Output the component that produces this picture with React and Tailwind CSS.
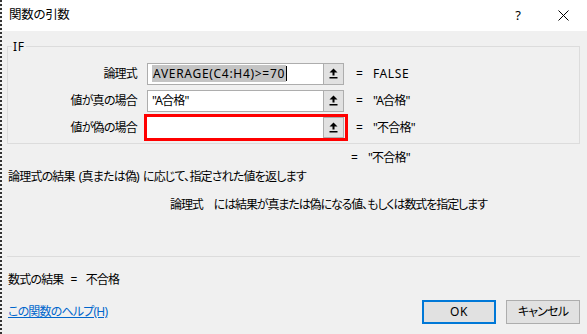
import React from "react";

const FONT = { fontFamily: '"Noto Sans","Noto Sans CJK JP",sans-serif' };

function RefIcon() {
  return (
    <svg width="9" height="11" viewBox="0 0 9 11">
      <path d="M4.5 0.5 L8.5 4.5 L5.5 4.5 L5.5 7.5 L3.5 7.5 L3.5 4.5 L0.5 4.5 Z" fill="#000" />
      <rect x="0.5" y="9" width="8" height="1.5" fill="#000" />
    </svg>
  );
}

function RefButton() {
  return (
    <div className="w-[21px] h-full border border-[#adadad] bg-[#e1e1e1] flex items-center justify-center shrink-0">
      <RefIcon />
    </div>
  );
}

function InputBox({ children }) {
  return (
    <div className="flex h-[22px] w-[197px]">
      <div className="flex-1 bg-white border border-[#adadad] border-r-0 flex items-center pl-[4px] overflow-hidden whitespace-nowrap">
        {children}
      </div>
      <RefButton />
    </div>
  );
}

function Row({ label, children, value, latin }) {
  return (
    <div className="flex items-center h-[27px]">
      <div className="w-[129px] text-right shrink-0">{label}</div>
      <div className="w-[10px] shrink-0" />
      {children}
      <div className="w-[12px] shrink-0" />
      <div className="w-[17px] shrink-0">=</div>
      <div className={latin ? "tracking-[0.6px]" : ""}>{value}</div>
    </div>
  );
}

export default function App() {
  return (
    <div
      className="w-[587px] h-[334px] bg-[#f0f0f0] text-[12px] leading-none text-black overflow-hidden tracking-[-0.8px] [font-feature-settings:'palt'] border-l-2 border-dotted border-[#333]"
      style={FONT}
    >
      {/* Title bar */}
      <div className="h-[31px] bg-white flex items-center pl-[7px] ml-[-2px]">
        <div className="pl-[2px] text-[12.5px] tracking-[-0.3px]">関数の引数</div>
        <div className="flex-1" />
        <div className="w-[20px] text-center text-[13px] tracking-normal">?</div>
        <div className="w-[25px]" />
        <div className="w-[20px] flex justify-center">
          <svg width="11" height="11" viewBox="0 0 11 11">
            <path d="M0.5 0.5 L10.5 10.5 M10.5 0.5 L0.5 10.5" stroke="#000" strokeWidth="1" />
          </svg>
        </div>
        <div className="w-[14px]" />
      </div>

      <div className="pl-[5px] pr-[7px]">
        {/* Fieldset */}
        <div className="relative mt-[15px] h-[98px] border border-[#dcdcdc] pt-[13px]">
          <div className="absolute left-[4px] top-[-6px] bg-[#f0f0f0] px-[1px] text-[12px] tracking-[0.6px]">IF</div>
          <Row label="論理式" value="FALSE" latin>
            <InputBox>
              <span className="bg-[#c4c4c4] leading-[17px] px-[1px] tracking-[0.7px]">AVERAGE(C4:H4)&gt;=70</span>
              <span className="w-[1px] h-[15px] bg-black" />
            </InputBox>
          </Row>
          <Row label="値が真の場合" value={'"A合格"'}>
            <InputBox>"A合格"</InputBox>
          </Row>
          <Row label="値が偽の場合" value={'"不合格"'}>
            <div className="ml-[-3px] mr-[-4px] border-[3px] border-[#ff0000] h-[27px] w-[204px] flex">
              <div className="flex h-full w-[197px]">
                <div className="flex-1 bg-white border-0" />
                <RefButton />
              </div>
            </div>
          </Row>
        </div>

        {/* overall result */}
        <div className="flex items-center h-[16px] mt-[6px] pl-[344px]">
          <div className="w-[17px]">=</div>
          <div>"不合格"</div>
        </div>

        {/* description */}
        <div className="h-[16px] mt-[3px] flex items-center pl-[1px] whitespace-pre">
          <span>論理式の結果</span>
          <span className="ml-[4px]">(真または偽)</span>
          <span className="ml-[4px]">に応じて、指定された値を返します</span>
        </div>
        <div className="h-[16px] mt-[12px] flex items-center pl-[163px] tracking-[-1.1px]">
          <span className="mr-[11px]">論理式</span>
          <span>には結果が真または偽になる値、もしくは数式を指定します</span>
        </div>

        {/* separator */}
        <div className="mt-[43px] h-[1px] bg-[#dcdcdc]" />

        <div className="h-[16px] mt-[15px] flex items-center pl-[1px]">
          <span>数式の結果</span>
          <span className="ml-[7px]">=</span>
          <span className="ml-[9px]">不合格</span>
        </div>

        {/* footer */}
        <div className="flex items-center mt-[12px] h-[24px]">
          <a className="text-[#0066cc] underline pl-[1px]" href="#">この関数のヘルプ(H)</a>
          <div className="flex-1" />
          <button className="w-[74px] h-[24px] bg-[#e1e1e1] border-2 border-[#0078d7] text-[12px] tracking-[0.5px]">OK</button>
          <div className="w-[10px]" />
          <button className="w-[74px] h-[24px] bg-[#e1e1e1] border border-[#adadad] text-[12px]">キャンセル</button>
        </div>
      </div>
    </div>
  );
}
